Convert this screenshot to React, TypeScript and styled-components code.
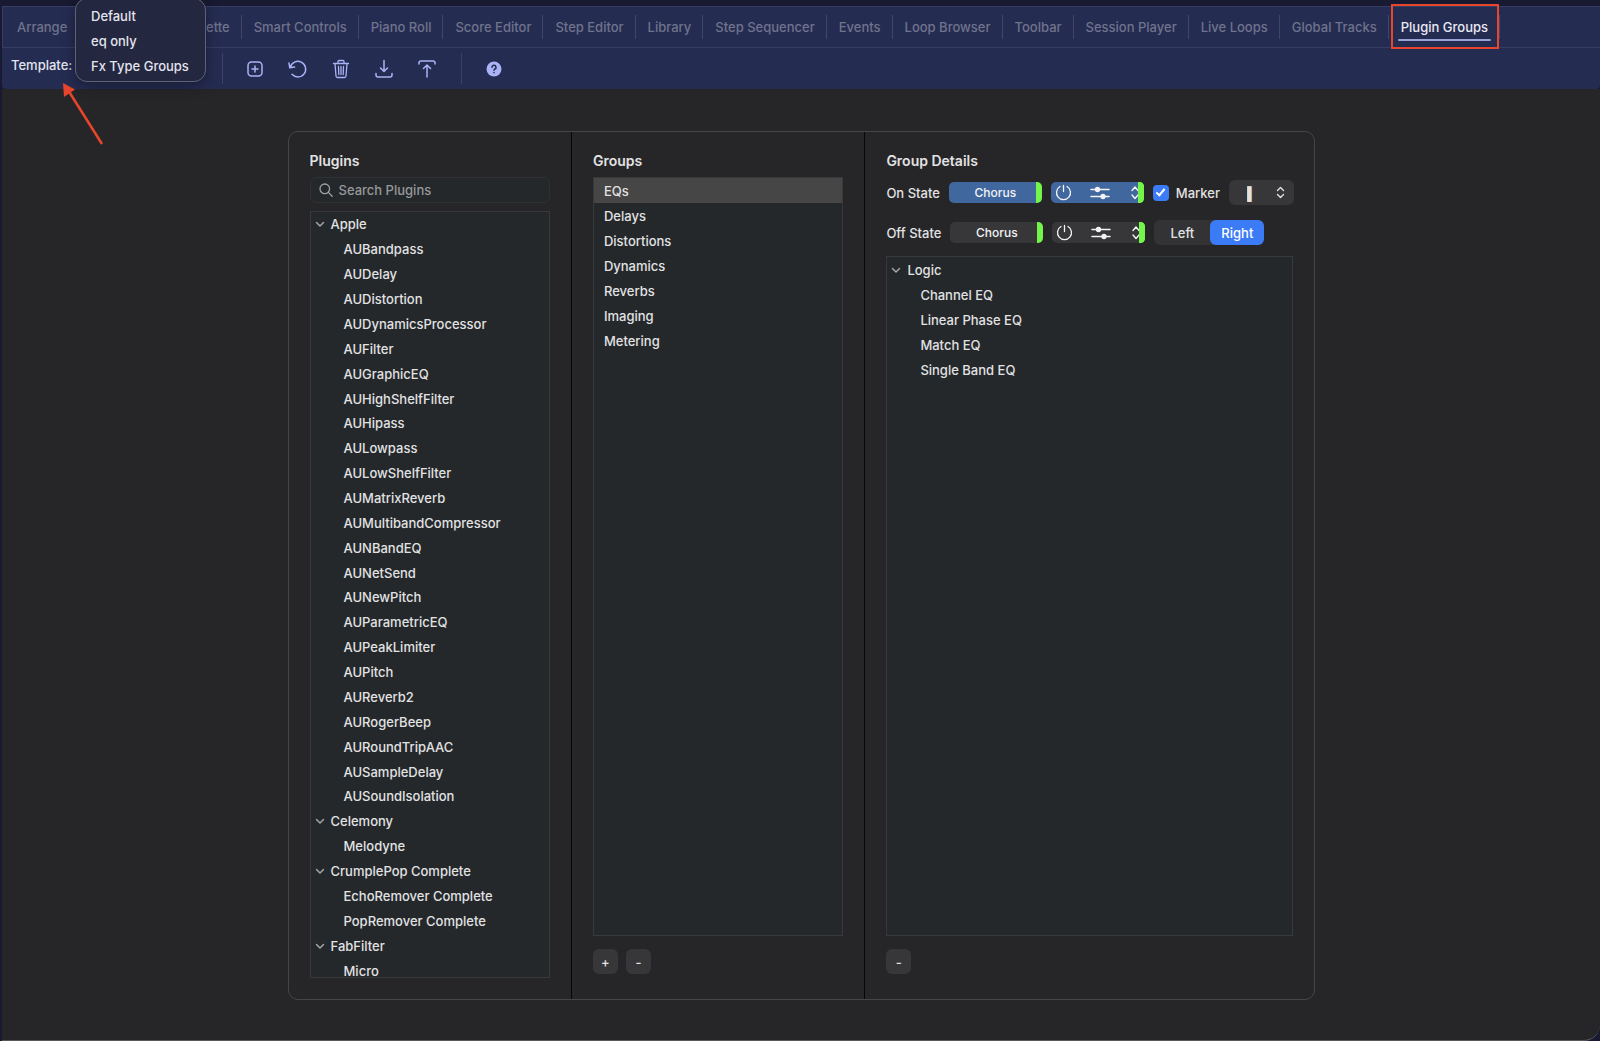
import React, { useState } from "react";
import styled, { createGlobalStyle, css } from "styled-components";

const GlobalStyle = createGlobalStyle`
  *, *::before, *::after { box-sizing: border-box; }
  body {
    margin: 0;
    background: #171a30;
    color: #e2e2e3;
    font-family: Inter, "Liberation Sans", sans-serif;
    font-size: 13px;
    font-weight: 500;
    line-height: 20px;
  }
  button, input, select { font: inherit; color: inherit; }
  ul { list-style: none; margin: 0; padding: 0; }
`;

const Window = styled.div`
  position: relative;
  display: flex;
  flex-direction: column;
  min-height: 100vh;
  padding: 6px 0 0 2px;
`;

const TabBar = styled.nav`
  display: flex;
  align-items: center;
  height: 42px;
  padding-left: 2px;
  background: #252c52;
  border: 1px solid #373d62;
  border-right: 0;
`;

const TabCell = styled.div`
  padding: 0 11px 0 12px;
  height: 24px;
  display: flex;
  align-items: center;
  border-right: 1px solid #414666;
`;

const Tab = styled.a<{ $active?: boolean }>`
  position: relative;
  color: #6f738c;
  text-decoration: none;
  white-space: nowrap;
  ${(p) =>
    p.$active &&
    css`
      color: #e9eaf2;
      &::after {
        content: "";
        position: absolute;
        left: -3px;
        right: -3px;
        bottom: -4px;
        height: 2px;
        border-radius: 1px;
        background: #9aa3d6;
      }
    `}
`;

const Highlight = styled.span`
  position: absolute;
  top: -13px;
  right: -11px;
  bottom: -12px;
  left: -10px;
  border: 2px solid #e8452c;
  pointer-events: none;
`;

const Toolbar = styled.div`
  display: flex;
  align-items: center;
  height: 41px;
  padding-left: 9px;
  background: #252c52;
  border-radius: 0 0 4px 4px;
`;

const TemplateField = styled.div`
  position: relative;
  width: 212px;
  height: 31px;
  line-height: 24px;
  border-right: 1px solid #3b4167;
  color: #e3e4ee;
`;

const Menu = styled.ul`
  position: absolute;
  z-index: 2;
  left: 64px;
  bottom: 2px;
  width: 131px;
  padding: 4px 0 3px;
  background: #23273f;
  border: 1px solid #5f6276;
  border-radius: 12px;
  box-shadow: 0 4px 14px rgba(0, 0, 0, 0.35);
`;

const MenuItem = styled.button`
  display: block;
  width: 100%;
  height: 25px;
  padding: 0 0 0 15px;
  border: 0;
  background: none;
  text-align: left;
  white-space: nowrap;
`;

const ToolGroup = styled.div`
  display: flex;
  align-items: center;
  gap: 19px;
  height: 31px;
  padding: 0 22px 0 20px;
  border-right: 1px solid #3b4167;
  & + & { border-right: 0; }
`;

const ToolButton = styled.button`
  display: grid;
  place-items: center;
  width: 24px;
  height: 24px;
  padding: 0;
  border: 0;
  background: none;
  color: #a9b3f5;
`;

const Arrow = styled.svg`
  position: absolute;
  left: 60px;
  top: 80px;
  pointer-events: none;
`;

const Main = styled.main`
  flex: 1;
  display: flex;
  justify-content: center;
  padding: 42px 24px 40px;
  background: #262628;
  border-bottom: 1px solid #58585a;
  border-radius: 0 0 16px 0;
`;

const Card = styled.div`
  display: grid;
  grid-template-columns: 283fr 294fr 450fr;
  width: 100%;
  max-width: 1027px;
  border: 1px solid #454547;
  border-radius: 10px;
`;

const Column = styled.section`
  display: flex;
  flex-direction: column;
  min-width: 0;
  padding: 19px 21px 21px;
  & + & { border-left: 1px solid #060607; }
`;

const Title = styled.h2`
  margin: 0 0 6px;
  font-size: 14px;
  line-height: 20px;
  font-weight: 600;
`;

const SearchBox = styled.label`
  display: flex;
  align-items: center;
  gap: 6px;
  height: 26px;
  padding: 0 8px;
  margin-bottom: 8px;
  background: #24282b;
  border: 1px solid #2f3133;
  border-radius: 6px;
  color: #a0a1a3;
`;

const SearchInput = styled.input`
  flex: 1;
  min-width: 0;
  padding: 0;
  border: 0;
  outline: 0;
  background: none;
  &::placeholder { color: #97989a; opacity: 1; }
`;

const ListBox = styled.div`
  flex: 1 1 0;
  min-height: 0;
  overflow: hidden;
  background: #24282b;
  border: 1px solid #38393b;
`;

const PluginList = styled.ul`
  display: grid;
  grid-auto-rows: 1fr;
  height: 771px;
`;

const CompactList = styled.ul`
  display: grid;
  grid-auto-rows: 25px;
`;

const Row = styled.li<{ $child?: boolean }>`
  display: flex;
  align-items: center;
  padding-left: ${(p) => (p.$child ? "33px" : "4px")};
  white-space: nowrap;
`;

const Disclosure = styled.button`
  display: flex;
  align-items: center;
  gap: 6px;
  padding: 0;
  border: 0;
  background: none;
  & > svg { color: #a3a4a6; }
`;

const GroupRow = styled.button<{ $selected?: boolean }>`
  width: 100%;
  height: 25px;
  padding: 0 10px;
  border: 0;
  text-align: left;
  background: ${(p) => (p.$selected ? "#464646" : "transparent")};
`;

const Actions = styled.div`
  display: flex;
  gap: 8px;
  height: 42px;
  padding-top: 13px;
`;

const SquareButton = styled.button`
  flex: none;
  display: grid;
  place-items: center;
  width: 25px;
  height: 25px;
  padding: 0;
  border: 0;
  border-radius: 6px;
  background: #373739;
`;

const StateRow = styled.div`
  display: flex;
  align-items: center;
  gap: 9px;
  height: 25px;
  margin: 3px 0 15px;
  white-space: nowrap;
  & + & { margin: 0 0 11px; }
`;

const Chip = styled.button<{ $on?: boolean }>`
  flex: none;
  display: flex;
  align-items: center;
  justify-content: center;
  width: 93px;
  height: 21px;
  padding: 0;
  border: 0;
  border-radius: 5px;
  background: linear-gradient(to left, #74f549 6px, ${(p) => (p.$on ? "#41679f" : "#373739")} 6px);
  color: #f2f3f5;
  font-size: 12px;
`;

const Check = styled.label`
  display: flex;
  align-items: center;
  gap: 7px;
`;

const CheckInput = styled.input`
  appearance: none;
  width: 16px;
  height: 16px;
  margin: 0;
  border-radius: 4px;
  background: #3b7cf6;
  display: grid;
  place-items: center;
  &:checked::after {
    content: "";
    width: 5px;
    height: 9px;
    margin-bottom: 2px;
    border: solid #fff;
    border-width: 0 2px 2px 0;
    transform: rotate(40deg);
  }
`;

const SelectWrap = styled.div`
  flex: none;
  display: flex;
  align-items: center;
  position: relative;
  width: 65px;
  height: 25px;
  border-radius: 6px;
  background: #373739;
  & > svg { position: absolute; right: 9px; pointer-events: none; }
`;

const Select = styled.select`
  appearance: none;
  width: 100%;
  height: 25px;
  padding: 0 0 0 18px;
  border: 0;
  background: none;
`;

const Segmented = styled.div`
  display: flex;
  height: 25px;
  border-radius: 6px;
  background: #333335;
`;

const Segment = styled.button<{ $on?: boolean }>`
  width: ${(p) => (p.$on ? "54px" : "56px")};
  padding: 0;
  border: 0;
  border-radius: 6px;
  background: ${(p) => (p.$on ? "#3b7cf6" : "none")};
  color: ${(p) => (p.$on ? "#fff" : "inherit")};
`;

const stroke = {
  fill: "none",
  stroke: "currentColor",
  strokeLinecap: "round" as const,
  strokeLinejoin: "round" as const,
};

const Chevron = () => (
  <svg width="10" height="8" viewBox="0 0 10 8" {...stroke} strokeWidth="1.5">
    <path d="M1.5 2.5 5 6l3.5-3.5" />
  </svg>
);

const UpDown = () => (
  <svg width="9" height="13" viewBox="0 0 9 13" {...stroke} strokeWidth="1.4">
    <path d="M1.5 4.5 4.5 1.5l3 3M1.5 8.5l3 3 3-3" />
  </svg>
);

const ChipIcons = () => (
  <svg width="93" height="21" viewBox="0 0 93 21" {...stroke} strokeWidth="1.3">
    <path d="M12.5 3.5v6M9 4.5a7 7 0 1 0 7 0" />
    <path d="M40 7.500h18M40 14.500h18" strokeWidth="1.5" />
    <circle cx="46.5" cy="7.5" r="2" fill="currentColor" />
    <circle cx="52" cy="14.5" r="2" fill="currentColor" />
    <path d="m81 8.500 3-3.500 3 3.500M81 13l3 3.500 3-3.500" strokeWidth="1.4" />
    <path d="M87 0h1q5 0 5 5v11q0 5-5 5h-1z" fill="#74f549" stroke="none" />
  </svg>
);

const tools = [
  {
    label: "Add template",
    art: (
      <>
        <rect x="4" y="4" width="14" height="14" rx="3.5" />
        <path d="M11 8v6M8 11h6" />
      </>
    ),
  },
  {
    label: "Revert",
    art: <path d="M2 5l.8 4.800 4.800-.8M3.300 9.300a7.800 7.800 0 1 1 1.700 7" />,
  },
  {
    label: "Delete template",
    art: (
      <path d="M3.500 5.500h15M8 5.500V3.500q0-1 1-1h4q1 0 1 1v2M5 5.500l1 12.500q.1 1.500 1.500 1.500h7q1.400 0 1.500-1.500l1-12.500M8.500 8.500l.3 8M11 8.500v8M13.500 8.500l-.3 8" strokeWidth="1.3" />
    ),
  },
  {
    label: "Import",
    art: <path d="M11 2.500v11M7.500 10l3.500 3.500 3.500-3.500M3 15.500v1.500q0 2 2 2h12q2 0 2-2v-1.500" />,
  },
  {
    label: "Export",
    art: <path d="M11 19V7M7.500 10.500 11 7l3.500 3.500M3 6v-1q0-2 2-2h12q2 0 2 2v1" />,
  },
];

const tabs = [
  "Arrange", "Mixer", "Color Palette", "Smart Controls", "Piano Roll", "Score Editor",
  "Step Editor", "Library", "Step Sequencer", "Events", "Loop Browser", "Toolbar",
  "Session Player", "Live Loops", "Global Tracks", "Plugin Groups",
];

const vendors = [
  {
    name: "Apple",
    plugins: [
      "AUBandpass", "AUDelay", "AUDistortion", "AUDynamicsProcessor", "AUFilter", "AUGraphicEQ",
      "AUHighShelfFilter", "AUHipass", "AULowpass", "AULowShelfFilter", "AUMatrixReverb",
      "AUMultibandCompressor", "AUNBandEQ", "AUNetSend", "AUNewPitch", "AUParametricEQ",
      "AUPeakLimiter", "AUPitch", "AUReverb2", "AURogerBeep", "AURoundTripAAC", "AUSampleDelay",
      "AUSoundIsolation",
    ],
  },
  { name: "Celemony", plugins: ["Melodyne"] },
  { name: "CrumplePop Complete", plugins: ["EchoRemover Complete", "PopRemover Complete"] },
  { name: "FabFilter", plugins: ["Micro"] },
];

const logic = [
  { name: "Logic", plugins: ["Channel EQ", "Linear Phase EQ", "Match EQ", "Single Band EQ"] },
];

const groups = ["EQs", "Delays", "Distortions", "Dynamics", "Reverbs", "Imaging", "Metering"];

const treeRows = (data: typeof vendors) =>
  data.map((v) => (
    <React.Fragment key={v.name}>
      <Row>
        <Disclosure>
          <Chevron />
          {v.name}
        </Disclosure>
      </Row>
      {v.plugins.map((p) => (
        <Row key={p} $child>{p}</Row>
      ))}
    </React.Fragment>
  ));

export default function App() {
  const [group, setGroup] = useState("EQs");
  const [side, setSide] = useState("Right");
  const [marker, setMarker] = useState(true);

  return (
    <Window>
      <GlobalStyle />
      <TabBar>
        {tabs.map((t) => {
          const active = t === "Plugin Groups";
          return (
            <TabCell key={t}>
              <Tab href="#" $active={active}>
                {t}
                {active && <Highlight />}
              </Tab>
            </TabCell>
          );
        })}
      </TabBar>
      <Toolbar>
        <TemplateField>
          Template:
          <Menu>
            {["Default", "eq only", "Fx Type Groups"].map((m) => (
              <li key={m}><MenuItem>{m}</MenuItem></li>
            ))}
          </Menu>
        </TemplateField>
        <ToolGroup>
          {tools.map((t) => (
            <ToolButton key={t.label} aria-label={t.label}>
              <svg width="22" height="22" viewBox="0 0 22 22" {...stroke} strokeWidth="1.5">{t.art}</svg>
            </ToolButton>
          ))}
        </ToolGroup>
        <ToolGroup>
          <ToolButton aria-label="Help">
            <svg width="22" height="22" viewBox="0 0 22 22" {...stroke} strokeWidth="1.6">
              <circle cx="11" cy="11" r="7.5" fill="currentColor" stroke="none" />
              <path d="M9 9.300a2 2 0 1 1 2.800 1.800q-.8.400-.8 1.200M11 14.500v.1" stroke="#252c52" />
            </svg>
          </ToolButton>
        </ToolGroup>
      </Toolbar>
      <Arrow width="48" height="68" viewBox="0 0 48 68">
        <path d="M42 64 8 10" stroke="#e8452c" strokeWidth="2.5" />
        <path d="M3 3 4 17 15 9.500Z" fill="#e8452c" />
      </Arrow>
      <Main>
        <Card>
          <Column>
            <Title>Plugins</Title>
            <SearchBox>
              <svg width="14" height="14" viewBox="0 0 14 14" {...stroke} strokeWidth="1.3">
                <circle cx="5.8" cy="5.8" r="4.8" />
                <path d="m9.400 9.400 3.800 3.800" />
              </svg>
              <SearchInput aria-label="Search Plugins" placeholder="Search Plugins" />
            </SearchBox>
            <ListBox>
              <PluginList>{treeRows(vendors)}</PluginList>
            </ListBox>
          </Column>
          <Column>
            <Title>Groups</Title>
            <ListBox>
              <CompactList>
                {groups.map((g) => (
                  <li key={g}>
                    <GroupRow $selected={g === group} onClick={() => setGroup(g)}>{g}</GroupRow>
                  </li>
                ))}
              </CompactList>
            </ListBox>
            <Actions>
              <SquareButton aria-label="Add group">+</SquareButton>
              <SquareButton aria-label="Remove group">-</SquareButton>
            </Actions>
          </Column>
          <Column>
            <Title>Group Details</Title>
            <StateRow>
              <span>On State</span>
              <Chip $on>Chorus</Chip>
              <Chip $on aria-label="On state controls"><ChipIcons /></Chip>
              <Check>
                <CheckInput type="checkbox" checked={marker} onChange={(e) => setMarker(e.target.checked)} />
                Marker
              </Check>
              <SelectWrap>
                <Select aria-label="Marker shape">
                  <option>▌</option>
                </Select>
                <UpDown />
              </SelectWrap>
            </StateRow>
            <StateRow>
              <span>Off State</span>
              <Chip>Chorus</Chip>
              <Chip aria-label="Off state controls"><ChipIcons /></Chip>
              <Segmented>
                {["Left", "Right"].map((s) => (
                  <Segment key={s} $on={s === side} onClick={() => setSide(s)}>{s}</Segment>
                ))}
              </Segmented>
            </StateRow>
            <ListBox>
              <CompactList>{treeRows(logic)}</CompactList>
            </ListBox>
            <Actions>
              <SquareButton aria-label="Remove plugin">-</SquareButton>
            </Actions>
          </Column>
        </Card>
      </Main>
    </Window>
  );
}
